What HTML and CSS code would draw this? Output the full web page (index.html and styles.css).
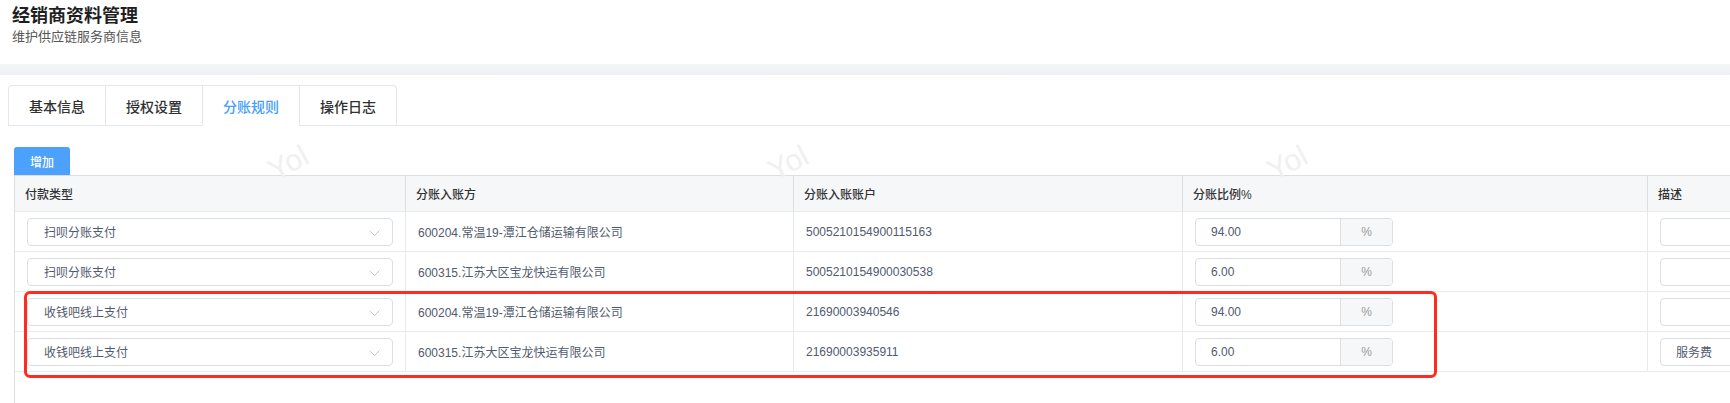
FILE: index.html
```html
<!DOCTYPE html>
<html>
<head>
    <meta charset="utf-8">
    <meta name="viewport" content="width=device-width, initial-scale=1.0">
    <title>经销商资料管理</title>
    <link rel="stylesheet" href="styles.css">
</head>
<body>
<div class="page-head">
    <h1 class="title">经销商资料管理</h1>
    <p class="subtitle">维护供应链服务商信息</p>
</div>
<div class="band"></div>

<div class="tabs">
    <div class="tab-nav">
        <div class="tab">基本信息</div>
        <div class="tab">授权设置</div>
        <div class="tab active">分账规则</div>
        <div class="tab">操作日志</div>
    </div>
</div>

<div class="panel">
    <button class="btn-add">增加</button>

    <div class="table">
        <div class="row head">
            <div class="cell">付款类型</div>
            <div class="cell">分账入账方</div>
            <div class="cell">分账入账账户</div>
            <div class="cell">分账比例%</div>
            <div class="cell">描述</div>
        </div>
        <div class="row">
            <div class="cell ctrl">
                <div class="select">扫呗分账支付<svg class="arrow" width="11" height="6" viewBox="0 0 11 6"><path d="M0.5 0.5 L5.5 5.5 L10.5 0.5" fill="none" stroke="#c5c8ce" stroke-width="1"/></svg></div>
            </div>
            <div class="cell">600204.常温19-潭江仓储运输有限公司</div>
            <div class="cell">5005210154900115163</div>
            <div class="cell ctrl">
                <div class="input-group"><span class="val">94.00</span><span class="addon">%</span></div>
            </div>
            <div class="cell ctrl"><div class="input"></div></div>
        </div>
        <div class="row">
            <div class="cell ctrl">
                <div class="select">扫呗分账支付<svg class="arrow" width="11" height="6" viewBox="0 0 11 6"><path d="M0.5 0.5 L5.5 5.5 L10.5 0.5" fill="none" stroke="#c5c8ce" stroke-width="1"/></svg></div>
            </div>
            <div class="cell">600315.江苏大区宝龙快运有限公司</div>
            <div class="cell">5005210154900030538</div>
            <div class="cell ctrl">
                <div class="input-group"><span class="val">6.00</span><span class="addon">%</span></div>
            </div>
            <div class="cell ctrl"><div class="input"></div></div>
        </div>
        <div class="row">
            <div class="cell ctrl">
                <div class="select">收钱吧线上支付<svg class="arrow" width="11" height="6" viewBox="0 0 11 6"><path d="M0.5 0.5 L5.5 5.5 L10.5 0.5" fill="none" stroke="#c5c8ce" stroke-width="1"/></svg></div>
            </div>
            <div class="cell">600204.常温19-潭江仓储运输有限公司</div>
            <div class="cell">21690003940546</div>
            <div class="cell ctrl">
                <div class="input-group"><span class="val">94.00</span><span class="addon">%</span></div>
            </div>
            <div class="cell ctrl"><div class="input"></div></div>
        </div>
        <div class="row">
            <div class="cell ctrl">
                <div class="select">收钱吧线上支付<svg class="arrow" width="11" height="6" viewBox="0 0 11 6"><path d="M0.5 0.5 L5.5 5.5 L10.5 0.5" fill="none" stroke="#c5c8ce" stroke-width="1"/></svg></div>
            </div>
            <div class="cell">600315.江苏大区宝龙快运有限公司</div>
            <div class="cell">21690003935911</div>
            <div class="cell ctrl">
                <div class="input-group"><span class="val">6.00</span><span class="addon">%</span></div>
            </div>
            <div class="cell ctrl"><div class="input">服务费</div></div>
        </div>
    </div>

    <!-- watermark + review highlight sit over the content -->
    <span class="mark m1">Yol</span>
    <span class="mark m2">Yol</span>
    <span class="mark m3">Yol</span>
    <div class="highlight"></div>
</div>
</body>
</html>
```

FILE: styles.css
```css
* {
    margin: 0;
    padding: 0;
    box-sizing: border-box;
}
body {
    font-family: "Liberation Sans", "Noto Sans CJK SC", sans-serif;
    font-size: 12px;
    color: #515a6e;
    background: #fff;
    overflow: hidden;
}
.page-head {
    height: 64px;
    padding: 4px 12px 0;
}
.title {
    font-size: 18px;
    line-height: 24px;
    font-weight: 700;
    color: #1f1f1f;
}
.subtitle {
    font-size: 13px;
    line-height: 18px;
    color: #555;
}
.band {
    height: 11px;
    background: linear-gradient(#f5f6f8, #eeeff2);
}
.tabs {
    display: flex;
    margin: 10px 0 0 8px;
    border-bottom: 1px solid #e4e7ed;
}
.tab-nav {
    display: flex;
    border: 1px solid #e4e7ed;
    border-bottom: 0;
    border-radius: 4px 4px 0 0;
}
.tab {
    width: 97px;
    height: 40px;
    margin-bottom: -1px;
    border-left: 1px solid #e4e7ed;
    border-bottom: 1px solid #e4e7ed;
    display: flex;
    align-items: center;
    justify-content: center;
    font-size: 14px;
    font-weight: 500;
    color: #303133;
}
.tab:first-child {
    width: 96px;
    border-left: 0;
}
.tab.active {
    color: #469ffb;
    border-bottom-color: #fff;
}
.panel {
    position: relative;
    padding: 21px 0 0 14px;
}
.btn-add {
    display: block;
    width: 56px;
    height: 28px;
    border: 0;
    border-radius: 3px 3px 0 0;
    background: #4ba1fc;
    color: #fff;
    font-family: inherit;
    font-size: 12px;
    font-weight: 500;
}
.table {
    min-height: 240px;
    border-top: 1px solid #dcdee2;
    border-left: 1px solid #dcdee2;
}
.row {
    display: grid;
    grid-template-columns: 391px 388px 389px 465px 1fr;
    height: 40px;
    border-bottom: 1px solid #e8eaec;
}
.row.head {
    height: 36px;
    background: #f6f7f9;
    font-weight: 500;
    color: #333;
}
.cell {
    display: flex;
    align-items: center;
    padding: 0 12px;
    border-right: 1px solid #e8eaec;
    white-space: nowrap;
    overflow: hidden;
}
.cell:last-child {
    border-right: 0;
    padding-right: 0;
}
.head .cell {
    padding: 0 10px;
    border-right-color: #dcdee2;
}
.cell.ctrl {
    padding-left: 12px;
}
.select {
    position: relative;
    display: flex;
    align-items: center;
    width: 366px;
    height: 28px;
    padding-left: 16px;
    border: 1px solid #dcdee2;
    border-radius: 4px;
    color: #515a6e;
}
.select .arrow {
    position: absolute;
    right: 12px;
    top: 11px;
}
.input-group {
    display: flex;
    width: 198px;
    height: 28px;
    border: 1px solid #dcdee2;
    border-radius: 4px;
    overflow: hidden;
}
.input-group .val {
    flex: 1;
    display: flex;
    align-items: center;
    padding-left: 15px;
    color: #515a6e;
}
.input-group .addon {
    width: 52px;
    display: flex;
    align-items: center;
    justify-content: center;
    background: #f6f7f9;
    border-left: 1px solid #dcdee2;
    color: #999;
}
.input {
    display: flex;
    align-items: center;
    flex: none;
    width: 280px;
    height: 28px;
    padding-left: 15px;
    border: 1px solid #dcdee2;
    border-radius: 4px;
    color: #515a6e;
}
.mark {
    position: absolute;
    top: 20px;
    font-size: 30px;
    color: #f0f0f0;
    transform: rotate(-28deg);
    pointer-events: none;
}
.m1 { left: 268px; }
.m2 { left: 768px; }
.m3 { left: 1267px; }
.highlight {
    position: absolute;
    left: 24px;
    top: 165px;
    width: 1413px;
    height: 87px;
    border: 3px solid #ff2b21;
    border-radius: 6px;
    pointer-events: none;
}
```
